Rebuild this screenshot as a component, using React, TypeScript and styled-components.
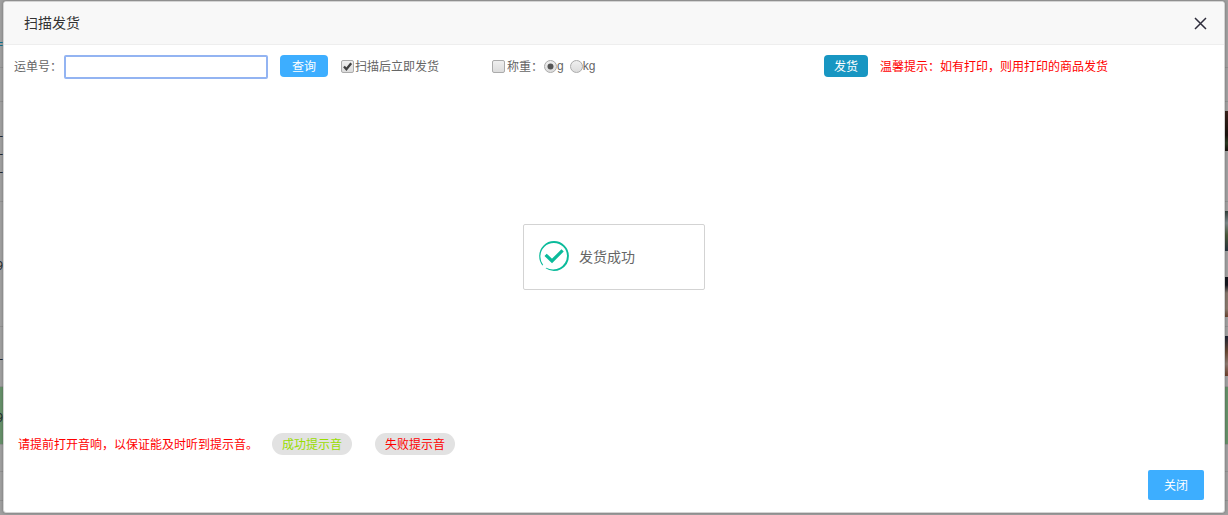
import React from "react";
import styled, { createGlobalStyle } from "styled-components";

const GlobalStyle = createGlobalStyle`
  * { box-sizing: border-box; }
  html, body { margin: 0; padding: 0; }
  body, button, input {
    font-family: "Noto Sans", "Noto Sans CJK SC", sans-serif;
    font-size: 12px;
  }
  body { background: #a0a0a0; color: #666; line-height: 18px; }
`;

const Page = styled.div`
  position: relative;
  display: flex;
  min-height: 100vh;
  padding: 1px 3px 2px;
  overflow: hidden;
`;

const Backdrop = styled.div`
  position: absolute;
  inset: 0;
  display: flex;
  flex-direction: column;
`;

const BackRow = styled.div<{ $height: number; $fill?: string }>`
  display: flex;
  flex: none;
  justify-content: space-between;
  height: ${(p) => p.$height}px;
  background: ${(p) => p.$fill ?? "#a0a0a0"};
  border-bottom: 1px solid #919191;
  color: #1f2a30;
`;

const RowMarks = styled.span<{ $color?: string }>`
  display: flex;
  flex-direction: column;
  align-items: flex-end;
  justify-content: center;
  width: 3px;
  padding-top: 4px;
  color: ${(p) => p.$color ?? "inherit"};
`;

const RowMark = styled.span`
  height: 18px;
`;

const Thumbs = styled.span`
  display: flex;
  flex-direction: column;
  gap: 26px;
  padding-top: 9px;
`;

const Thumb = styled.span<{ $paint: string }>`
  width: 4px;
  height: 40px;
  background: ${(p) => p.$paint};
`;

const Dialog = styled.section`
  position: relative;
  display: flex;
  flex: 1;
  flex-direction: column;
  background: #fff;
  border: 1px solid #d4d4d4;
  border-radius: 3px;
  box-shadow: 0 0 3px rgba(0, 0, 0, 0.3);
`;

const Header = styled.header`
  display: flex;
  align-items: center;
  justify-content: space-between;
  height: 43px;
  padding: 0 17px 0 20px;
  background: #f8f8f8;
  border-bottom: 1px solid #eee;
  border-radius: 2px 2px 0 0;
`;

const Title = styled.h1`
  margin: 0;
  color: #333;
  font-size: 14px;
  font-weight: 400;
  line-height: 20px;
`;

const IconButton = styled.button`
  display: flex;
  padding: 0;
  background: none;
  border: 0;
  cursor: pointer;
`;

const Toolbar = styled.form`
  display: flex;
  align-items: flex-start;
  padding: 10px;
  line-height: 24px;
  white-space: nowrap;
`;

const FieldLabel = styled.label`
  width: 50px;
`;

const NumberInput = styled.input`
  width: 204px;
  height: 24px;
  margin-right: 12px;
  padding: 0 4px;
  background: #fff;
  border: 2px solid #93b4f2;
  border-radius: 2px;
  outline: none;
`;

const ActionButton = styled.button<{ $fill: string; $width: number }>`
  width: ${(p) => p.$width}px;
  height: 22px;
  padding: 2px 0 0;
  background: ${(p) => p.$fill};
  border: 0;
  border-radius: 4px;
  color: #fff;
  line-height: 20px;
  cursor: pointer;
`;

const InstantOption = styled.div`
  width: 151px;
  margin-left: 13px;
`;

const WeightOptions = styled.div`
  display: flex;
  gap: 6px;
  width: 332px;
`;

const Weigh = styled.div`
  width: 46px;
`;

const Choice = styled.label<{ $gap?: number }>`
  display: flex;
  align-items: flex-start;
  gap: ${(p) => p.$gap ?? 0}px;
`;

const Unit = styled.span`
  font-family: "Liberation Sans", sans-serif;
  line-height: 22px;
`;

const Mark = styled.span`
  display: grid;
  width: 13px;
  height: 13px;
  margin-top: 5px;
  > * { grid-area: 1 / 1; }
  svg { pointer-events: none; }
`;

const Control = styled.input`
  appearance: none;
  width: 13px;
  height: 13px;
  margin: 0;
  background: linear-gradient(#efefef, #dcdcdc);
  border: 1px solid #ababab;
  border-radius: ${(p) => (p.type === "radio" ? "50%" : "2px")};
`;

const Hint = styled.span`
  margin-left: 12px;
  color: #f00;
`;

const Body = styled.div`
  flex: 1;
`;

const SoundBar = styled.div`
  display: flex;
  padding-left: 14px;
  color: #f00;
`;

const SoundText = styled.span`
  line-height: 24px;
  height: 22px;
`;

const SoundButton = styled.button<{ $color: string; $gap: number }>`
  width: 80px;
  height: 22px;
  margin-left: ${(p) => p.$gap}px;
  padding: 2px 0 0;
  background: #e2e2e2;
  border: 0;
  border-radius: 11px;
  color: ${(p) => p.$color};
  line-height: 20px;
  cursor: pointer;
`;

const Footer = styled.footer`
  display: flex;
  justify-content: flex-end;
  padding: 15px 20px 12px;
`;

const CloseButton = styled.button`
  width: 56px;
  height: 30px;
  padding: 2px 0 0;
  background: #3daeff;
  border: 0;
  border-radius: 2px;
  color: #fff;
  line-height: 28px;
  cursor: pointer;
`;

const Notice = styled.div`
  position: absolute;
  top: 50%;
  left: 50%;
  display: flex;
  align-items: center;
  gap: 9px;
  width: 182px;
  height: 66px;
  padding: 0 14px;
  background: #fff;
  border: 1px solid #d3d3d3;
  border-radius: 2px;
  font-size: 14px;
  line-height: 20px;
  transform: translate(-50%, -50%);
`;

type Row = {
  height: number;
  fill?: string;
  marks?: string[];
  color?: string;
  thumbs?: string[];
};

const rows: Row[] = [
  { height: 68, color: "#0f6f8f", marks: ["", "="] },
  { height: 34 },
  {
    height: 100,
    marks: ["-", "-", "-"],
    thumbs: ["linear-gradient(#3a241c, #1c120e 60%, #2b3a22 80%, #17100c)"],
  },
  {
    height: 125,
    marks: ["9"],
    thumbs: [
      "linear-gradient(#33413c, #7d8a8c 30%, #4c5a3a 60%, #26333f)",
      "linear-gradient(#15171f 20%, #85776c 40%, #8a7a6e 80%, #6b4630)",
    ],
  },
  {
    height: 60,
    marks: ["-"],
    thumbs: ["linear-gradient(#1d2335, #6b4a34 40%, #8c7a70 70%, #6f3f2a)"],
  },
  { height: 58, fill: "#66906a", marks: ["9"] },
  { height: 27 },
  { height: 29 },
];

const TickIcon = () => (
  <svg width="13" height="13" viewBox="0 0 13 13" fill="none" aria-hidden="true">
    <path d="M3 6.5 5.4 9.2 10.2 3.2" stroke="#404040" strokeWidth="2.3" />
  </svg>
);

const DotIcon = () => (
  <svg width="13" height="13" viewBox="0 0 13 13" aria-hidden="true">
    <circle cx="6.5" cy="6.5" r="3" fill="#555" />
  </svg>
);

const CrossIcon = () => (
  <svg width="13" height="13" viewBox="0 0 13 13" fill="none" aria-hidden="true">
    <path d="M1 1 12 12M12 1 1 12" stroke="#2e2d3c" strokeWidth="1.5" />
  </svg>
);

const SuccessIcon = () => (
  <svg width="32" height="32" viewBox="0 1 32 32" fill="none" aria-hidden="true">
    <path
      d="M4.6 25.6A14.9 14.9 0 0 1 1.2 16A14.9 14.9 0 0 1 16 1.1A14.9 14.9 0 0 1 30.9 16A14.9 14.9 0 0 1 7.6 28.3L8.2 27.7A13.9 13.9 0 0 0 29 16A13.1 13.1 0 0 0 16 2.9A13.4 13.4 0 0 0 2.4 16A13.8 13.8 0 0 0 5.2 25Z"
      fill="#0bbb9b"
    />
    <path d="M7.6 14.8 14 21 24.6 10.4" stroke="#0bbb9b" strokeWidth="3.2" />
  </svg>
);

export default function App() {
  return (
    <>
      <GlobalStyle />
      <Page>
        <Backdrop aria-hidden="true">
          {rows.map((row, i) => (
            <BackRow key={i} $height={row.height} $fill={row.fill}>
              <RowMarks $color={row.color}>
                {row.marks?.map((mark, j) => (
                  <RowMark key={j}>{mark}</RowMark>
                ))}
              </RowMarks>
              <Thumbs>
                {row.thumbs?.map((paint) => (
                  <Thumb key={paint} $paint={paint} />
                ))}
              </Thumbs>
            </BackRow>
          ))}
        </Backdrop>
        <Dialog role="dialog" aria-labelledby="dialog-title">
          <Header>
            <Title id="dialog-title">扫描发货</Title>
            <IconButton type="button" aria-label="关闭">
              <CrossIcon />
            </IconButton>
          </Header>
          <Toolbar onSubmit={(e) => e.preventDefault()}>
            <FieldLabel htmlFor="waybill">运单号：</FieldLabel>
            <NumberInput id="waybill" type="text" />
            <ActionButton type="submit" $fill="#3daeff" $width={48}>
              查询
            </ActionButton>
            <InstantOption>
              <Choice $gap={1}>
                <Mark>
                  <Control type="checkbox" defaultChecked />
                  <TickIcon />
                </Mark>
                扫描后立即发货
              </Choice>
            </InstantOption>
            <WeightOptions>
              <Weigh>
                <Choice $gap={2}>
                  <Mark>
                    <Control type="checkbox" />
                  </Mark>
                  称重：
                </Choice>
              </Weigh>
              <Choice>
                <Mark>
                  <Control type="radio" name="unit" defaultChecked />
                  <DotIcon />
                </Mark>
                <Unit>g</Unit>
              </Choice>
              <Choice>
                <Mark>
                  <Control type="radio" name="unit" />
                </Mark>
                <Unit>kg</Unit>
              </Choice>
            </WeightOptions>
            <ActionButton type="button" $fill="#1896c2" $width={44}>
              发货
            </ActionButton>
            <Hint>温馨提示：如有打印，则用打印的商品发货</Hint>
          </Toolbar>
          <Body />
          <SoundBar>
            <SoundText>请提前打开音响，以保证能及时听到提示音。</SoundText>
            <SoundButton type="button" $color="#99dd00" $gap={14}>
              成功提示音
            </SoundButton>
            <SoundButton type="button" $color="#f00" $gap={23}>
              失败提示音
            </SoundButton>
          </SoundBar>
          <Footer>
            <CloseButton type="button">关闭</CloseButton>
          </Footer>
          <Notice role="status">
            <SuccessIcon />
            发货成功
          </Notice>
        </Dialog>
      </Page>
    </>
  );
}
